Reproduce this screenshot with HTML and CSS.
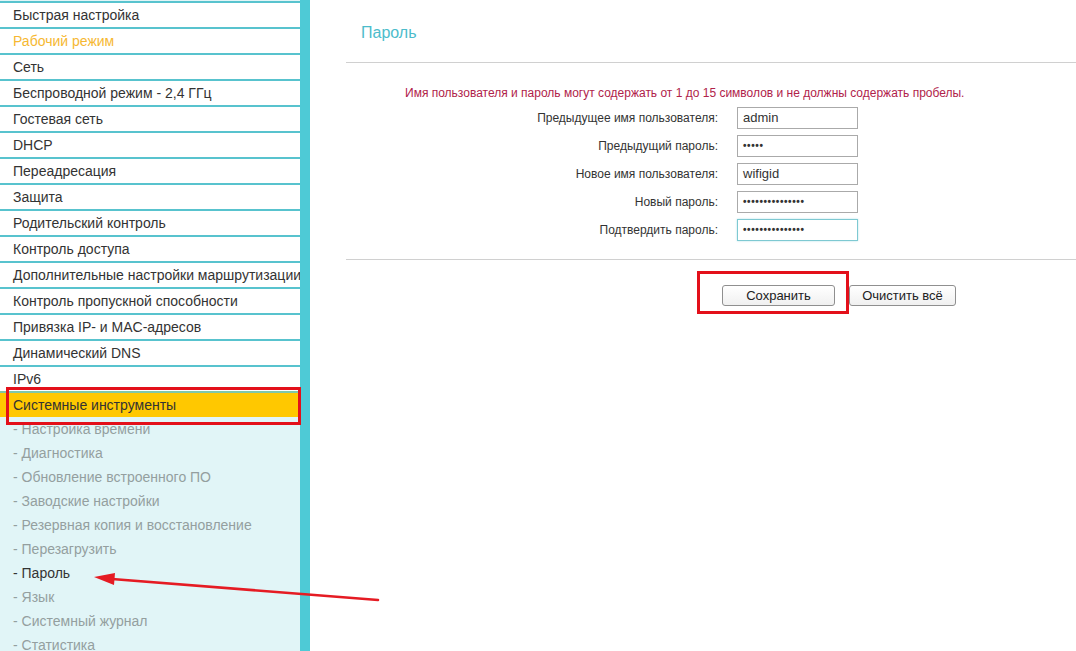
FILE: index.html
```html
<!DOCTYPE html>
<html lang="ru">
<head>
<meta charset="utf-8">
<title>Пароль</title>
<link rel="stylesheet" href="styles.css">
</head>
<body>
<div class="page">
  <nav class="sidebar">
    <ul class="menu">
      <li class="item">Быстрая настройка</li>
      <li class="item item-orange">Рабочий режим</li>
      <li class="item">Сеть</li>
      <li class="item">Беспроводной режим - 2,4 ГГц</li>
      <li class="item">Гостевая сеть</li>
      <li class="item">DHCP</li>
      <li class="item">Переадресация</li>
      <li class="item">Защита</li>
      <li class="item">Родительский контроль</li>
      <li class="item">Контроль доступа</li>
      <li class="item">Дополнительные настройки маршрутизации</li>
      <li class="item">Контроль пропускной способности</li>
      <li class="item">Привязка IP- и MAC-адресов</li>
      <li class="item">Динамический DNS</li>
      <li class="item">IPv6</li>
      <li class="item item-active">Системные инструменты</li>
    </ul>
    <ul class="submenu">
      <li class="sub">- Настройка времени</li>
      <li class="sub">- Диагностика</li>
      <li class="sub">- Обновление встроенного ПО</li>
      <li class="sub">- Заводские настройки</li>
      <li class="sub">- Резервная копия и восстановление</li>
      <li class="sub">- Перезагрузить</li>
      <li class="sub sub-current">- Пароль</li>
      <li class="sub">- Язык</li>
      <li class="sub">- Системный журнал</li>
      <li class="sub">- Статистика</li>
    </ul>
  </nav>
  <main class="main">
    <h1 class="title">Пароль</h1>
    <p class="note">Имя пользователя и пароль могут содержать от 1 до 15 символов и не должны содержать пробелы.</p>
    <div class="form">
      <span class="label">Предыдущее имя пользователя:</span>
      <span class="field">admin</span>
      <span class="label">Предыдущий пароль:</span>
      <span class="field field-dots">•••••</span>
      <span class="label">Новое имя пользователя:</span>
      <span class="field">wifigid</span>
      <span class="label">Новый пароль:</span>
      <span class="field field-dots">•••••••••••••••</span>
      <span class="label">Подтвердить пароль:</span>
      <span class="field field-dots field-focus">•••••••••••••••</span>
    </div>
    <div class="actions">
      <button class="btn btn-save" type="button">Сохранить</button>
      <button class="btn btn-clear" type="button">Очистить всё</button>
    </div>
  </main>
</div>
<div class="mark mark-menu"></div>
<div class="mark mark-save"></div>
<svg class="arrow" width="300" height="40" viewBox="0 0 300 40">
  <line x1="288" y1="30" x2="22" y2="9" stroke="#e51b23" stroke-width="2.6" stroke-linecap="round"/>
  <polygon points="4,7 25,3 24,15" fill="#e51b23"/>
</svg>
</body>
</html>
```
FILE: styles.css
```css
* { box-sizing: border-box; }
html, body {
  margin: 0;
  padding: 0;
  height: 100%;
  overflow: hidden;
  background: #fff;
}
body {
  font-family: "Liberation Sans", Arial, sans-serif;
  color: #333;
  position: relative;
}
.page {
  display: flex;
  height: 651px;
}
.sidebar {
  width: 310px;
  flex: none;
  border-right: 10px solid #4ecad6;
  padding-top: 1px;
  background: #e1f5f7;
}
.menu, .submenu {
  list-style: none;
  margin: 0;
  padding: 0;
}
.menu {
  background: #fff;
}
.item {
  border-top: 2px solid #58c3ce;
  height: 26px;
  line-height: 24px;
  padding-left: 13px;
  font-size: 14px;
  color: #333;
  white-space: nowrap;
  overflow: hidden;
}
.item-orange { color: #f6b832; }
.item-active {
  background: #ffc800;
  border-top-color: #7fc7a8;
  height: 26px;
  line-height: 25px;
}
.sub {
  height: 24px;
  line-height: 24px;
  padding-left: 13px;
  font-size: 14px;
  color: #949f9f;
  white-space: nowrap;
}
.sub-current { color: #333; }

.main {
  flex: 1;
  padding-left: 36px;
}
.title {
  margin: 0;
  font-weight: normal;
  font-size: 16px;
  line-height: 18px;
  color: #4cbccb;
  padding: 24px 0 20px 15px;
  border-bottom: 1px solid #d0d0d0;
}
.note {
  margin: 23px 0 7px 59px;
  font-size: 12px;
  line-height: 14px;
  color: #b0224a;
}
.form {
  display: grid;
  grid-template-columns: 372px 121px;
  column-gap: 19px;
  row-gap: 6px;
  align-items: center;
  padding-bottom: 18px;
  border-bottom: 1px solid #d0d0d0;
}
.label {
  text-align: right;
  font-size: 12px;
  color: #333;
}
.field {
  height: 22px;
  border: 1px solid #aaa;
  padding: 0 5px;
  font-size: 13px;
  line-height: 20px;
  color: #333;
}
.field-dots {
  font-size: 10px;
  font-weight: bold;
  letter-spacing: 0.6px;
  line-height: 20px;
  color: #333;
}
.field-focus {
  border-color: #7ec9d2;
  box-shadow: 0 0 2px #b5e3e8;
}
.actions {
  display: flex;
  gap: 14px;
  padding: 25px 0 0 376px;
}
.btn {
  height: 21px;
  font-family: "Liberation Sans", Arial, sans-serif;
  font-size: 13px;
  color: #222;
  background: linear-gradient(#fff, #f0f0f0);
  border: 1px solid #8f8f8f;
  border-radius: 3px;
  padding: 0;
}
.btn-save { width: 113px; }
.btn-clear { width: 107px; }

.mark {
  position: absolute;
  border: 3px solid #e3101a;
}
.mark-menu {
  left: 6px;
  top: 387px;
  width: 295px;
  height: 38px;
}
.mark-save {
  left: 697px;
  top: 271px;
  width: 152px;
  height: 43px;
}
.arrow {
  position: absolute;
  left: 90px;
  top: 570px;
}
```
